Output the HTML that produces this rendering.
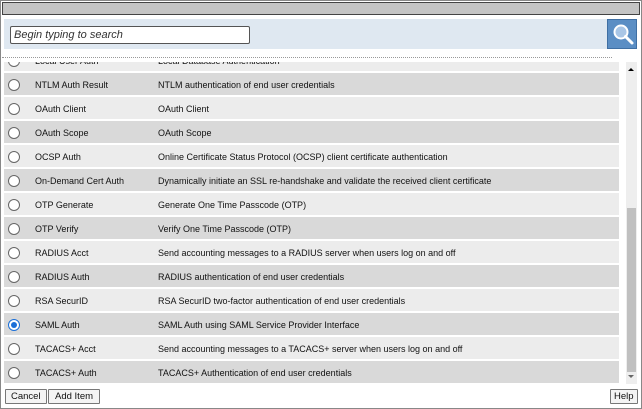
<!DOCTYPE html>
<html><head><style>
*{margin:0;padding:0;box-sizing:border-box}
body{width:642px;height:409px;background:#fff;font-family:"Liberation Sans",sans-serif;font-size:9px;color:#111;position:relative;overflow:hidden}
.frame{position:absolute;left:0;top:0;width:642px;height:409px;border:1px solid #888}
.title{position:absolute;left:2px;top:2px;width:638px;height:13px;background:#c4c4c4;border:1px solid #444}
.band{position:absolute;left:4px;top:19px;width:633px;height:30px;background:#dfe8f1}
.inp{position:absolute;left:10px;top:26px;width:240px;height:18px;background:#fff;border:1px solid #555;border-radius:2px;font-style:italic;font-size:11px;color:#333;padding:2px 3px;font-family:"Liberation Sans",sans-serif}
.btn{position:absolute;left:607px;top:19px;width:30px;height:30px;background:#5b8ec4;border:1px solid #3f6fa3}
.dots{position:absolute;left:2px;top:57px;width:610px;border-top:1px dotted #999}
.list{position:absolute;left:4px;top:62px;width:615px;height:322px;overflow:hidden}
.row{position:absolute;left:0;width:615px;height:22px}
.d{background:#d9d9d9}.l{background:#ececec}
.row span{position:absolute;top:7px;white-space:nowrap}
.c1{left:31px}.c2{left:154px}
.r{position:absolute;left:4px;top:6px;width:12px;height:12px;border-radius:50%;border:1px solid #666;background:#fff}
.r.on{border-color:#1a6fd8}.r.on:after{content:"";position:absolute;left:2px;top:2px;width:6px;height:6px;border-radius:50%;background:#1a6fd8}
.sb{position:absolute;left:626px;top:62px;width:11px;height:322px;background:#eee}
.th{position:absolute;left:1px;top:146px;width:9px;height:164px;background:#c0c0c0}
.b{position:absolute;top:389px;height:15px;border:1px solid #777;background:#f4f4f4;font-size:9.5px;line-height:13px;padding:0 5px;border-radius:1px}
</style></head><body>
<div class="frame"></div>
<div class="title"></div>
<div class="band"></div>
<div class="inp">Begin typing to search</div>
<div class="btn"><svg width="30" height="30" viewBox="0 0 30 30"><circle cx="13" cy="12" r="6.5" fill="#a9c6e6" stroke="#fff" stroke-width="2"/><line x1="17.5" y1="16.5" x2="24" y2="23" stroke="#fff" stroke-width="3" stroke-linecap="round"/></svg></div>
<div class="dots"></div>
<div class="list">
<div class="row l" style="top:-13px"><div class="r"></div><span class="c1">Local User Auth</span><span class="c2">Local Database Authentication</span></div>
<div class="row d" style="top:11px"><div class="r"></div><span class="c1">NTLM Auth Result</span><span class="c2">NTLM authentication of end user credentials</span></div>
<div class="row l" style="top:35px"><div class="r"></div><span class="c1">OAuth Client</span><span class="c2">OAuth Client</span></div>
<div class="row d" style="top:59px"><div class="r"></div><span class="c1">OAuth Scope</span><span class="c2">OAuth Scope</span></div>
<div class="row l" style="top:83px"><div class="r"></div><span class="c1">OCSP Auth</span><span class="c2">Online Certificate Status Protocol (OCSP) client certificate authentication</span></div>
<div class="row d" style="top:107px"><div class="r"></div><span class="c1">On-Demand Cert Auth</span><span class="c2">Dynamically initiate an SSL re-handshake and validate the received client certificate</span></div>
<div class="row l" style="top:131px"><div class="r"></div><span class="c1">OTP Generate</span><span class="c2">Generate One Time Passcode (OTP)</span></div>
<div class="row d" style="top:155px"><div class="r"></div><span class="c1">OTP Verify</span><span class="c2">Verify One Time Passcode (OTP)</span></div>
<div class="row l" style="top:179px"><div class="r"></div><span class="c1">RADIUS Acct</span><span class="c2">Send accounting messages to a RADIUS server when users log on and off</span></div>
<div class="row d" style="top:203px"><div class="r"></div><span class="c1">RADIUS Auth</span><span class="c2">RADIUS authentication of end user credentials</span></div>
<div class="row l" style="top:227px"><div class="r"></div><span class="c1">RSA SecurID</span><span class="c2">RSA SecurID two-factor authentication of end user credentials</span></div>
<div class="row d" style="top:251px"><div class="r on"></div><span class="c1">SAML Auth</span><span class="c2">SAML Auth using SAML Service Provider Interface</span></div>
<div class="row l" style="top:275px"><div class="r"></div><span class="c1">TACACS+ Acct</span><span class="c2">Send accounting messages to a TACACS+ server when users log on and off</span></div>
<div class="row d" style="top:299px"><div class="r"></div><span class="c1">TACACS+ Auth</span><span class="c2">TACACS+ Authentication of end user credentials</span></div>
</div>
<div class="sb"><div style="position:absolute;left:2px;top:6px;border:3px solid transparent;border-bottom:3px solid #000;border-top:0"></div><div class="th"></div><div style="position:absolute;left:2px;top:313px;border:3px solid transparent;border-top:3px solid #666;border-bottom:0"></div></div>
<div class="b" style="left:5px">Cancel</div>
<div class="b" style="left:48px;padding:0 6px">Add Item</div>
<div class="b" style="left:610px;padding:0 3px">Help</div>
</body></html>
